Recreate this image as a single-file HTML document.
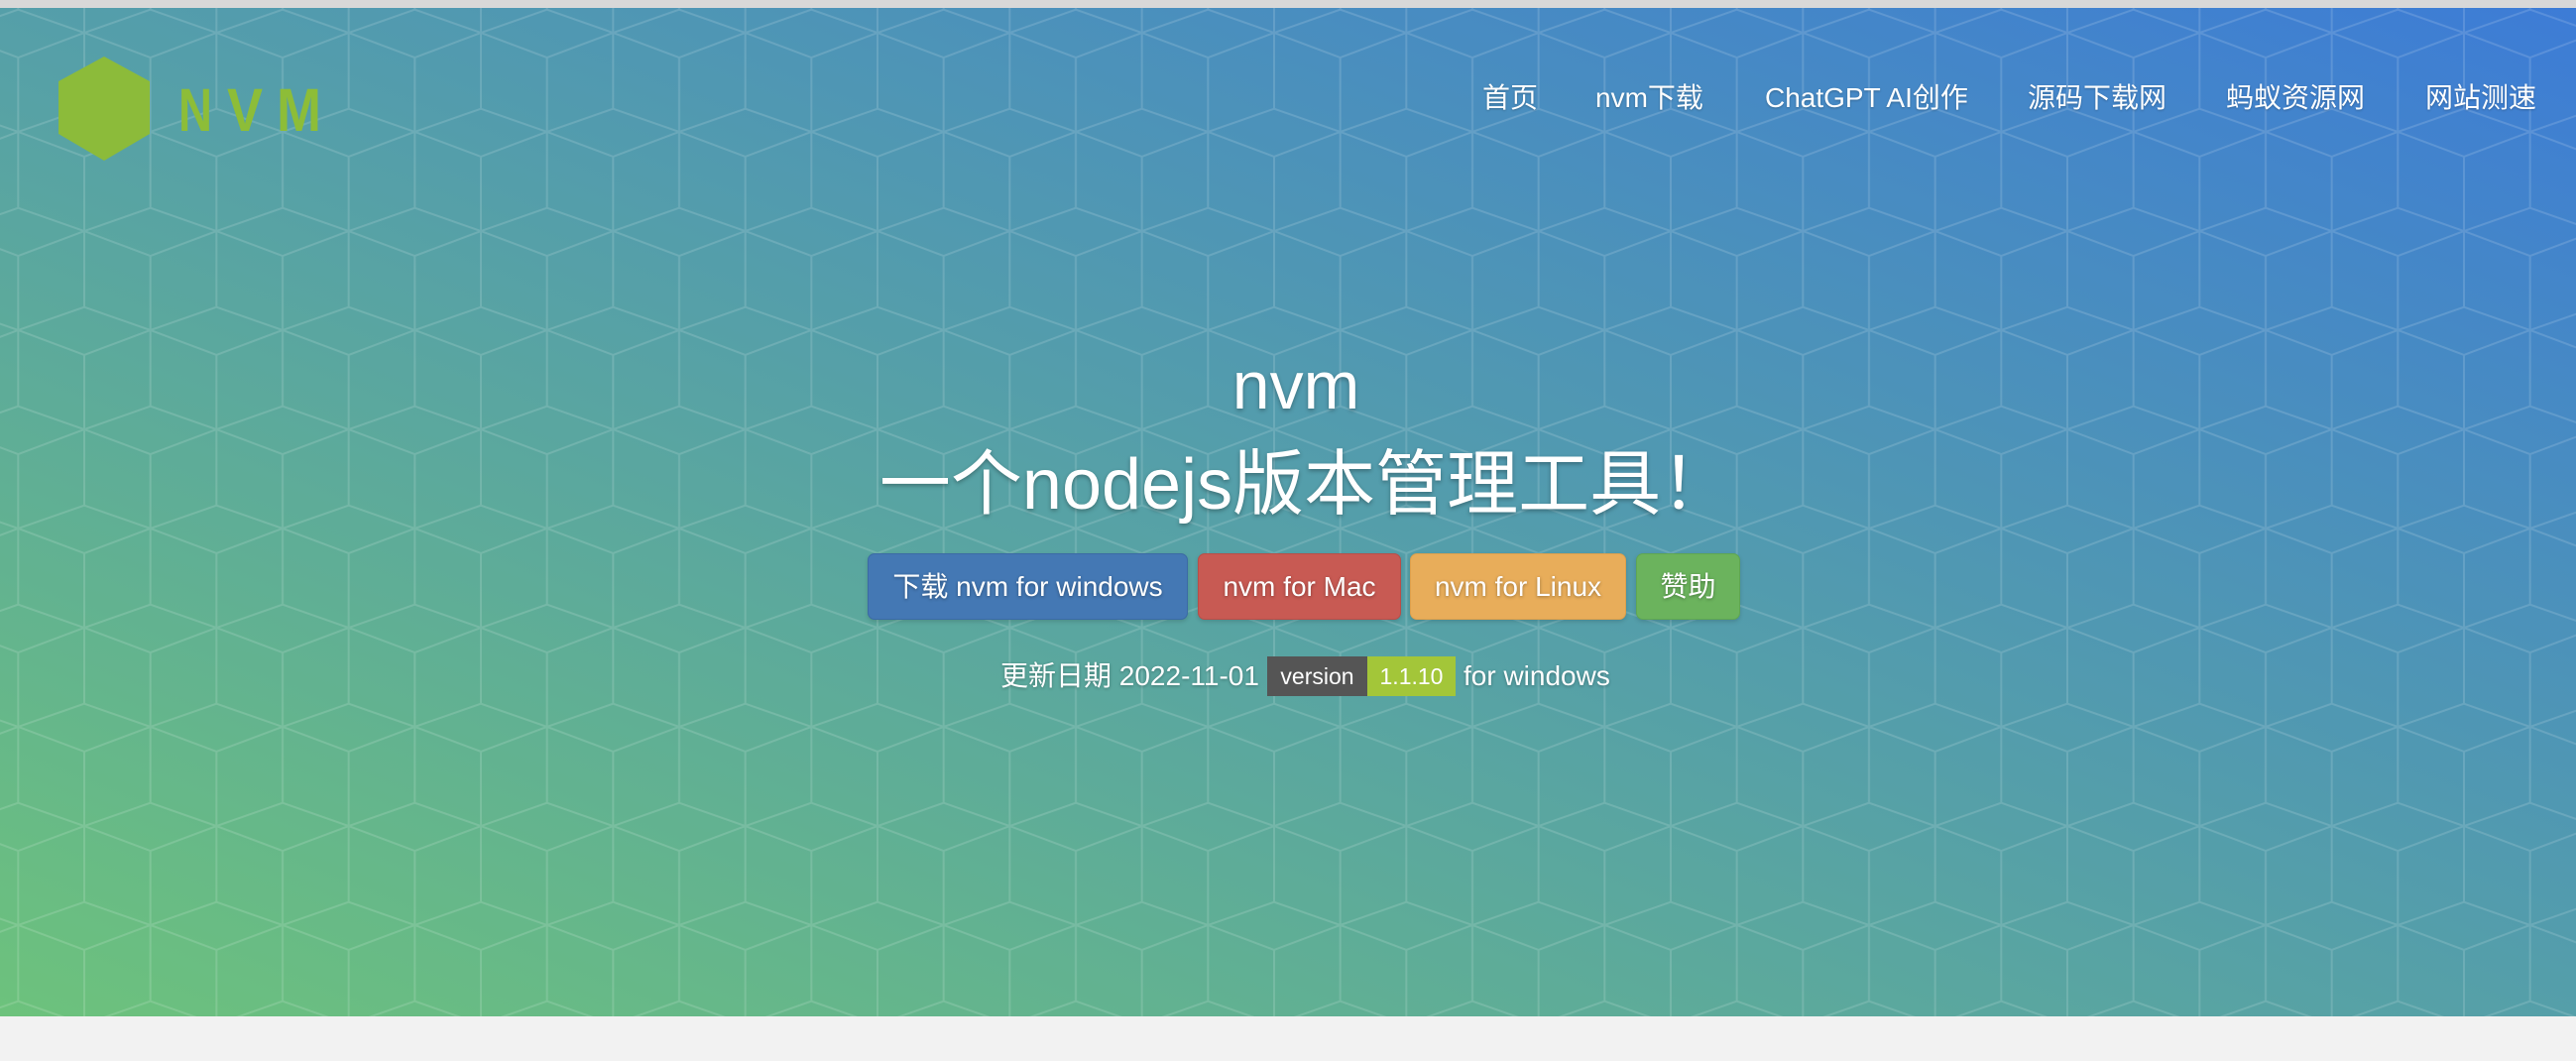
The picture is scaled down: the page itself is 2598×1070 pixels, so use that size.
<!DOCTYPE html>
<html><head><meta charset="utf-8"><style>
*{margin:0;padding:0;box-sizing:border-box}
html,body{width:2598px;height:1070px;overflow:hidden;background:#f2f2f2;font-family:"Liberation Sans","Noto Sans CJK SC",sans-serif;color:#fff}
#top{position:absolute;left:0;top:0;width:2598px;height:8px;background:#d8d8d8}
#hero{position:absolute;left:0;top:8px;width:2598px;height:1017px;background:linear-gradient(to top right,#6dc27c,#3d7cd6);overflow:hidden}
#hero svg.bg{position:absolute;left:0;top:-8px}
.abs{position:absolute;white-space:nowrap}
.nav{top:70px;font-size:28px;line-height:40px;text-shadow:0 1px 2px rgba(0,0,0,.25)}
.t{left:0;width:2598px;text-align:center;text-shadow:0 2px 4px rgba(0,0,0,.3)}
.btn{position:absolute;top:550px;height:67px;line-height:65px;font-size:28px;text-align:center;border-radius:7px;text-shadow:0 1px 3px rgba(0,0,0,.35);box-shadow:0 2px 4px rgba(0,0,0,.15)}
</style></head><body>
<div id="top"></div>
<div id="hero">
<svg class="bg" width="2598" height="1040">
<defs><pattern id="p" width="133.333" height="200" patternUnits="userSpaceOnUse" patternTransform="translate(85,-17)">
<g fill="none" stroke="rgba(255,255,255,0.14)" stroke-width="2">
<path d="M0,50L66.667,26.7L133.333,50M0,50L66.667,75L133.333,50M0,126.7L66.667,150L133.333,126.7M0,175L66.667,150L133.333,175M66.667,75V200M66.667,0V26.7M0,0V126.7M0,175V200M133.333,0V126.7M133.333,175V200"/>
</g></pattern></defs>
<rect width="2598" height="1040" fill="url(#p)"/>
</svg>
<svg class="abs" style="left:0;top:-8px" width="400" height="240">
<polygon points="105,57 151,82 151,135 105,162 59,135 59,82" fill="#8cbb3a"/>
<g font-family="Liberation Sans" font-weight="bold" font-size="61" fill="#8dbd38">
<text x="180" y="132" textLength="34" lengthAdjust="spacingAndGlyphs">N</text>
<text x="229" y="132" textLength="36" lengthAdjust="spacingAndGlyphs">V</text>
<text x="279" y="132" textLength="45" lengthAdjust="spacingAndGlyphs">M</text>
</g>
</svg>
<div class="abs nav" style="left:1495px;top:71px">首页</div>
<div class="abs nav" style="left:1609px;top:71px">nvm下载</div>
<div class="abs nav" style="left:1780px;top:71px">ChatGPT AI创作</div>
<div class="abs nav" style="left:2045px;top:71px">源码下载网</div>
<div class="abs nav" style="left:2245px;top:71px">蚂蚁资源网</div>
<div class="abs nav" style="left:2446px;top:71px">网站测速</div>

<div class="abs t" style="top:344px;left:8px;font-size:68px;line-height:75px">nvm</div>
<div class="abs t" style="top:444px;left:18px;font-size:72px;line-height:75px">一个nodejs版本管理工具！</div>

<div class="btn" style="left:875px;width:323px;background:#4478b4;border:1px solid #3b6aa5">下载 nvm for windows</div>
<div class="btn" style="left:1208px;width:205px;background:#c85a53;border:1px solid #b94e48">nvm for Mac</div>
<div class="btn" style="left:1422px;width:218px;background:#e8ad5a;border:1px solid #dea04c">nvm for Linux</div>
<div class="btn" style="left:1650px;width:105px;background:#6bb35d;border:1px solid #5fa652">赞助</div>

<div class="abs" style="left:1009px;top:654px;font-size:28px;line-height:40px;text-shadow:0 1px 3px rgba(0,0,0,.3)">更新日期 2022-11-01</div>
<div class="abs" style="left:1278px;top:654px;width:101px;height:40px;background:#555;color:#fff;font-size:23px;line-height:40px;text-align:center">version</div>
<div class="abs" style="left:1379px;top:654px;width:89px;height:40px;background:#a3c639;color:#fff;font-size:23px;line-height:40px;text-align:center">1.1.10</div>
<div class="abs" style="left:1476px;top:654px;font-size:28px;line-height:40px;text-shadow:0 1px 3px rgba(0,0,0,.3)">for windows</div>
</div>
</body></html>
